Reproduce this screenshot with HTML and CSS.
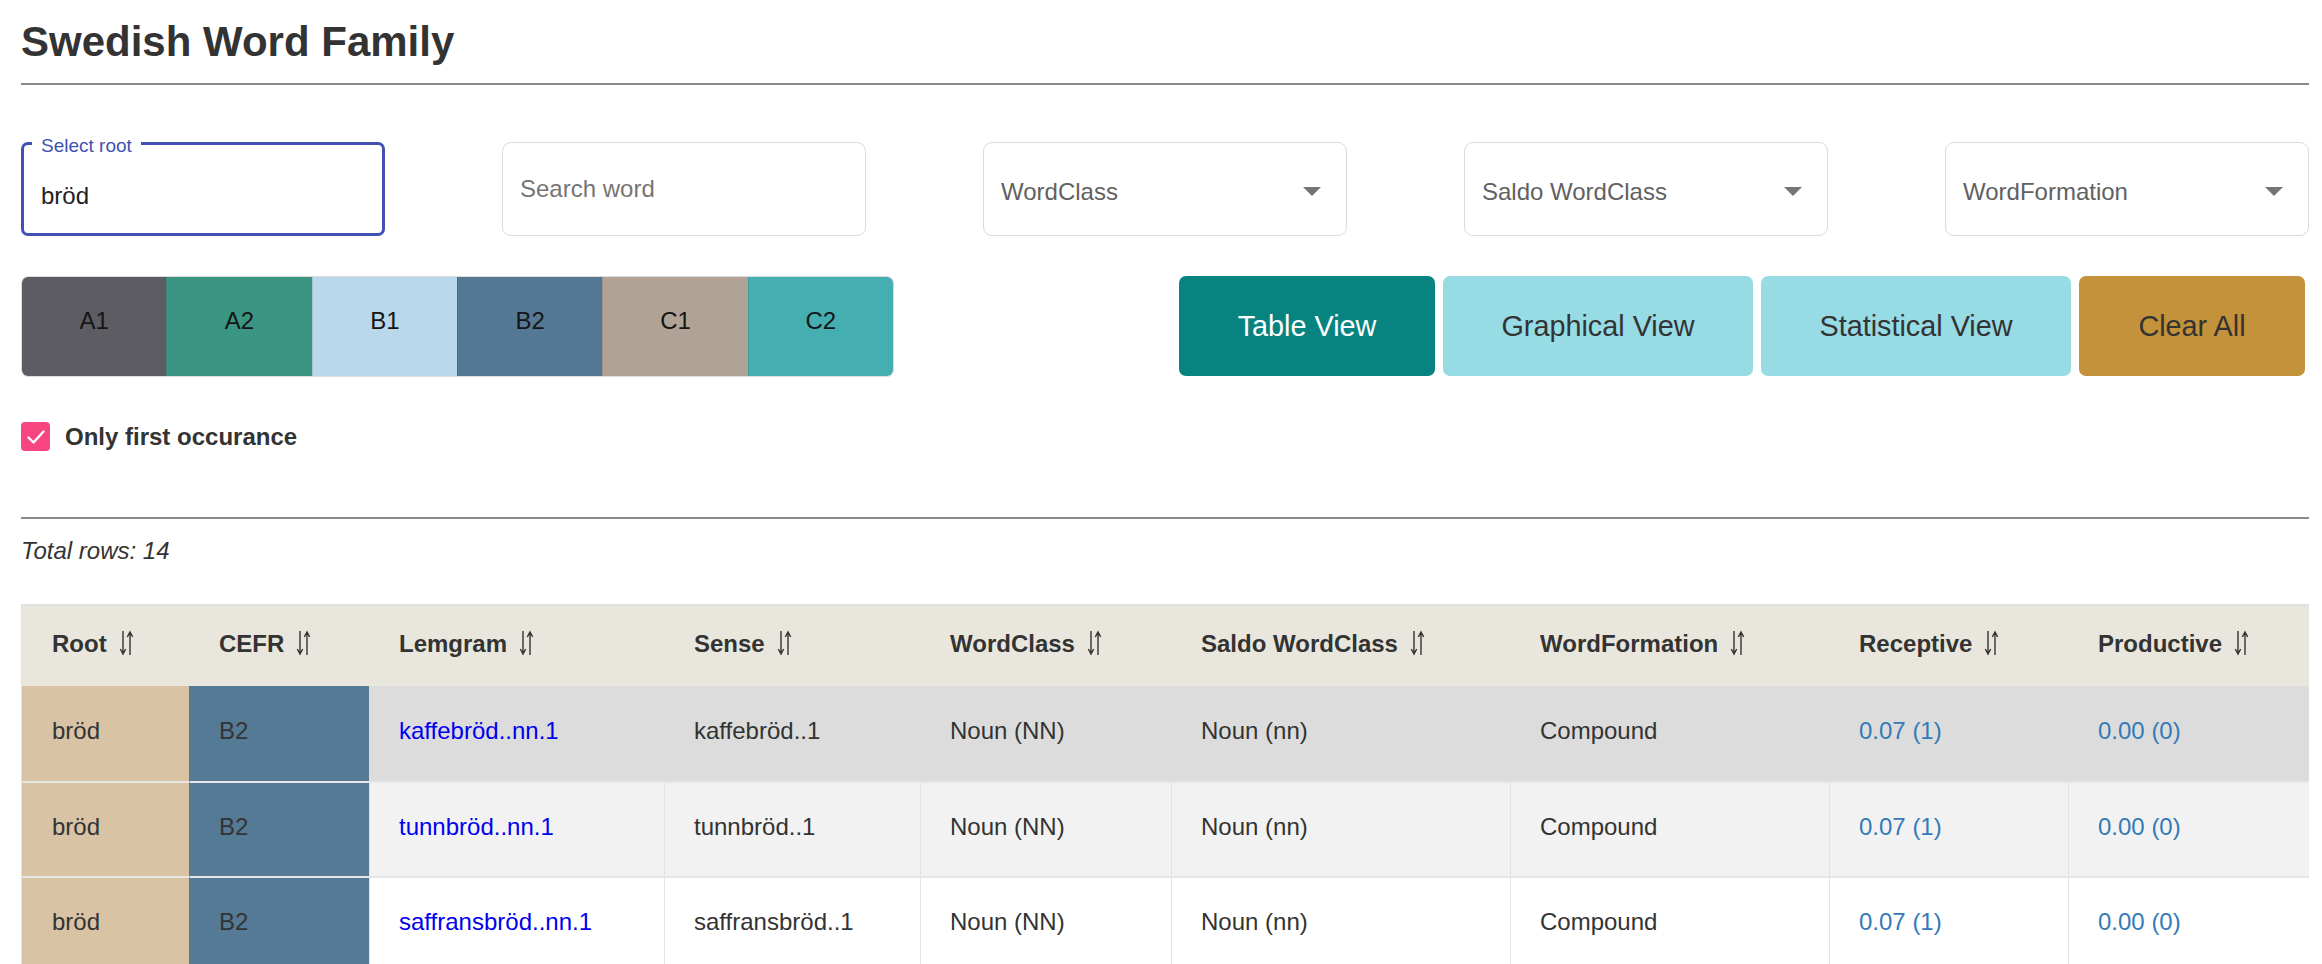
FILE: index.html
```html
<!DOCTYPE html>
<html lang="en">
<head>
<meta charset="utf-8">
<title>Swedish Word Family</title>
<link rel="stylesheet" href="styles.css">
</head>
<body>
<div class="page">
  <h1 class="title">Swedish Word Family</h1>
  <hr class="rule">

  <div class="filters">
    <div class="field field-root">
      <span class="field-label">Select root</span>
      <span class="field-value">bröd</span>
    </div>
    <div class="field">
      <span class="placeholder">Search word</span>
    </div>
    <div class="field field-select">
      <span class="select-text">WordClass</span>
      <svg class="caret" width="18" height="9" viewBox="0 0 18 9"><path d="M0 0h18L9 9z"/></svg>
    </div>
    <div class="field field-select">
      <span class="select-text">Saldo WordClass</span>
      <svg class="caret" width="18" height="9" viewBox="0 0 18 9"><path d="M0 0h18L9 9z"/></svg>
    </div>
    <div class="field field-select">
      <span class="select-text">WordFormation</span>
      <svg class="caret" width="18" height="9" viewBox="0 0 18 9"><path d="M0 0h18L9 9z"/></svg>
    </div>
  </div>

  <div class="toolbar">
    <div class="levels">
      <button class="level lv-a1">A1</button>
      <button class="level lv-a2">A2</button>
      <button class="level lv-b1">B1</button>
      <button class="level lv-b2">B2</button>
      <button class="level lv-c1">C1</button>
      <button class="level lv-c2">C2</button>
    </div>
    <div class="views">
      <button class="view view-table">Table View</button>
      <button class="view view-graph">Graphical View</button>
      <button class="view view-stat">Statistical View</button>
      <button class="view view-clear">Clear All</button>
    </div>
  </div>

  <div class="check-row">
    <span class="check-box"><svg width="20" height="20" viewBox="0 0 20 20"><path d="M2.5 10.5l5 5L17.5 4.5" fill="none" stroke="#fff" stroke-width="2.4" stroke-linecap="round" stroke-linejoin="round"/></svg></span>
    <span class="check-label">Only first occurance</span>
  </div>

  <hr class="rule rule-2">

  <p class="total">Total rows: 14</p>

  <table class="words">
    <colgroup>
      <col class="c-root"><col class="c-cefr"><col class="c-lemgram"><col class="c-sense"><col class="c-wc"><col class="c-saldo"><col class="c-wf"><col class="c-rec"><col class="c-prod">
    </colgroup>
    <thead>
      <tr>
        <th>Root<svg class="sort" width="16" height="26" viewBox="0 0 16 26"><path d="M4 1v23M1.3 19l2.7 5 2.7-5M11 25V2M8.3 7l2.7-5 2.7 5"/></svg></th>
        <th>CEFR<svg class="sort" width="16" height="26" viewBox="0 0 16 26"><path d="M4 1v23M1.3 19l2.7 5 2.7-5M11 25V2M8.3 7l2.7-5 2.7 5"/></svg></th>
        <th>Lemgram<svg class="sort" width="16" height="26" viewBox="0 0 16 26"><path d="M4 1v23M1.3 19l2.7 5 2.7-5M11 25V2M8.3 7l2.7-5 2.7 5"/></svg></th>
        <th>Sense<svg class="sort" width="16" height="26" viewBox="0 0 16 26"><path d="M4 1v23M1.3 19l2.7 5 2.7-5M11 25V2M8.3 7l2.7-5 2.7 5"/></svg></th>
        <th>WordClass<svg class="sort" width="16" height="26" viewBox="0 0 16 26"><path d="M4 1v23M1.3 19l2.7 5 2.7-5M11 25V2M8.3 7l2.7-5 2.7 5"/></svg></th>
        <th>Saldo WordClass<svg class="sort" width="16" height="26" viewBox="0 0 16 26"><path d="M4 1v23M1.3 19l2.7 5 2.7-5M11 25V2M8.3 7l2.7-5 2.7 5"/></svg></th>
        <th>WordFormation<svg class="sort" width="16" height="26" viewBox="0 0 16 26"><path d="M4 1v23M1.3 19l2.7 5 2.7-5M11 25V2M8.3 7l2.7-5 2.7 5"/></svg></th>
        <th>Receptive<svg class="sort" width="16" height="26" viewBox="0 0 16 26"><path d="M4 1v23M1.3 19l2.7 5 2.7-5M11 25V2M8.3 7l2.7-5 2.7 5"/></svg></th>
        <th>Productive<svg class="sort" width="16" height="26" viewBox="0 0 16 26"><path d="M4 1v23M1.3 19l2.7 5 2.7-5M11 25V2M8.3 7l2.7-5 2.7 5"/></svg></th>
      </tr>
    </thead>
    <tbody>
      <tr class="row-hover">
        <td class="cell-root">bröd</td>
        <td class="cell-cefr">B2</td>
        <td><a class="lemgram" href="#">kaffebröd..nn.1</a></td>
        <td>kaffebröd..1</td>
        <td>Noun (NN)</td>
        <td>Noun (nn)</td>
        <td>Compound</td>
        <td class="num">0.07 (1)</td>
        <td class="num">0.00 (0)</td>
      </tr>
      <tr class="row-odd">
        <td class="cell-root">bröd</td>
        <td class="cell-cefr">B2</td>
        <td><a class="lemgram" href="#">tunnbröd..nn.1</a></td>
        <td>tunnbröd..1</td>
        <td>Noun (NN)</td>
        <td>Noun (nn)</td>
        <td>Compound</td>
        <td class="num">0.07 (1)</td>
        <td class="num">0.00 (0)</td>
      </tr>
      <tr class="row-even">
        <td class="cell-root">bröd</td>
        <td class="cell-cefr">B2</td>
        <td><a class="lemgram" href="#">saffransbröd..nn.1</a></td>
        <td>saffransbröd..1</td>
        <td>Noun (NN)</td>
        <td>Noun (nn)</td>
        <td>Compound</td>
        <td class="num">0.07 (1)</td>
        <td class="num">0.00 (0)</td>
      </tr>
    </tbody>
  </table>
</div>
</body>
</html>
```

FILE: styles.css
```css
* { box-sizing: border-box; }

html, body {
  margin: 0;
  background: #fff;
}

body {
  overflow: hidden;
  font-family: "Liberation Sans", Arial, Helvetica, sans-serif;
  font-size: 24px;
  color: #333;
}

.page {
  padding: 0 13px 40px 21px;
}

.title {
  margin: 0;
  padding-top: 17px;
  font-size: 42px;
  line-height: 50px;
  font-weight: 700;
  color: #333;
}

.rule {
  margin: 16px 0 0;
  height: 0;
  border: 0;
  border-top: 2px solid #8a8a8a;
}

.rule-2 {
  margin-top: 66px;
}

/* ---------- filters ---------- */
.filters {
  display: flex;
  justify-content: space-between;
  margin-top: 57px;
}

.field {
  position: relative;
  width: 364px;
  height: 94px;
  display: flex;
  align-items: center;
  padding: 0 17px;
  border: 1px solid #dadada;
  border-radius: 9px;
  background: #fff;
  line-height: 28px;
}

.field-root {
  border: 3px solid #3f51b5;
  border-radius: 7px;
  padding: 14px 17px 0 17px;
}

.field-label {
  position: absolute;
  left: 8px;
  top: -9px;
  padding: 0 9px;
  background: #fff;
  color: #3f51b5;
  font-size: 19px;
  line-height: 19px;
}

.field-value {
  color: #222;
}

.placeholder {
  color: #757575;
}

.field-select {
  justify-content: space-between;
  padding-top: 5px;
  padding-right: 25px;
}

.select-text {
  color: #616161;
}

.caret {
  fill: #757575;
  flex: none;
}

/* ---------- toolbar ---------- */
.toolbar {
  display: flex;
  justify-content: space-between;
  align-items: flex-start;
  margin-top: 40px;
}

.levels {
  display: flex;
  width: 873px;
  height: 101px;
  border: 1px solid #dcdcdc;
  border-radius: 7px;
  overflow: hidden;
}

.level {
  flex: 1;
  margin: 0;
  padding: 0 0 12px;
  border: 0;
  border-left: 1px solid rgba(0, 0, 0, 0.1);
  font-family: inherit;
  font-size: 24px;
  color: #151515;
  cursor: pointer;
}

.level:first-child { border-left: 0; }

.lv-a1 { background: #5d5c62; }
.lv-a2 { background: #3a9683; }
.lv-b1 { background: #b9d8eb; }
.lv-b2 { background: #557994; }
.lv-c1 { background: #b0a294; }
.lv-c2 { background: #44aeb0; }

.views {
  display: flex;
  gap: 8px;
  margin-right: 4px;
}

.view {
  height: 100px;
  margin: 0;
  padding: 0;
  border: 0;
  border-radius: 7px;
  font-family: inherit;
  font-size: 28.8px;
  color: #333;
  cursor: pointer;
}

.view-table { width: 256px; background: #078380; color: #fff; }
.view-graph { width: 310px; background: #97dbe5; }
.view-stat  { width: 310px; background: #97dbe5; }
.view-clear { width: 226px; background: #c4923a; }

/* ---------- checkbox ---------- */
.check-row {
  display: flex;
  align-items: center;
  gap: 15px;
  height: 29px;
  margin-top: 45px;
}

.check-box {
  width: 29px;
  height: 29px;
  border-radius: 4px;
  background: #f7457f;
  display: flex;
  align-items: center;
  justify-content: center;
}

.check-label {
  font-weight: 700;
  line-height: 28px;
  color: #333;
}

/* ---------- total ---------- */
.total {
  margin: 18px 0 0;
  font-style: italic;
  line-height: 28px;
  color: #333;
}

/* ---------- table ---------- */
.words {
  width: 2288px;
  margin-top: 39px;
  table-layout: fixed;
  border-collapse: separate;
  border-spacing: 0;
  border-top: 2px solid #e0e0e0;
  border-left: 1px solid #e0e0e0;
}

.c-root    { width: 167px; }
.c-cefr    { width: 180px; }
.c-lemgram { width: 295px; }
.c-sense   { width: 256px; }
.c-wc      { width: 251px; }
.c-saldo   { width: 339px; }
.c-wf      { width: 319px; }
.c-rec     { width: 239px; }
.c-prod    { width: 241px; }

.words thead tr { height: 80px; }
.words tbody tr { height: 95px; }

.words th {
  padding: 0 8px 5px 30px;
  background: #e9e7dd;
  text-align: left;
  font-weight: 700;
  vertical-align: middle;
  white-space: nowrap;
  line-height: 28px;
}

.sort {
  margin-left: 12px;
  vertical-align: -4px;
  fill: none;
  stroke: #333;
  stroke-width: 1.4;
}

.words td {
  padding: 0 8px 5px 29px;
  border-left: 1px solid #e2e2e2;
  border-top: 2px solid #e6e6e6;
  vertical-align: middle;
  white-space: nowrap;
  line-height: 28px;
  color: #333;
}

.words td:first-child {
  border-left: 0;
  padding-left: 30px;
}

.words tbody tr:first-child td { border-top: 0; }

.row-hover td { background: #dcdcdc; border-left-color: #dcdcdc; }
.row-odd td   { background: #f2f2f2; }
.row-even td  { background: #fff; }

.words td.cell-root { background: #d9c3a5; }
.words td.cell-cefr { background: #557a95; border-left-color: #557a95; }

.lemgram {
  color: #0000ee;
  text-decoration: none;
}

.words td.num { color: #337ab7; }
```
